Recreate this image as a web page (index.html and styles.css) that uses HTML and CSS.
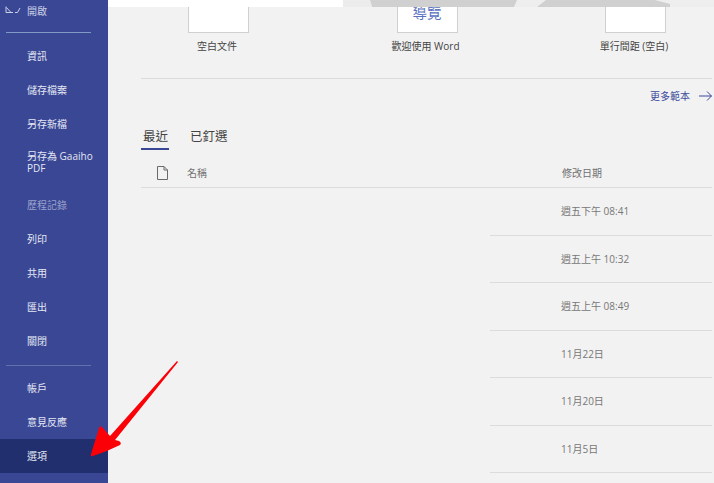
FILE: index.html
```html
<!DOCTYPE html>
<html>
	<head>
		<meta charset="UTF-8">
		<title>Word - 常用</title>
		<link rel="stylesheet" href="styles.css">
	</head>
	<body>
		<div class="page">
			<div class="sidebar">
				<div class="open-row">
					<svg class="open-icon" width="16" height="8" viewBox="0 0 16 8"><path d="M1 0.500V6.500H8M1.500 1.500L5.500 6M10 6.500H12.500L15 2" fill="none" stroke="#c9cfe6" stroke-width="1"/></svg>
					<span>開啟</span>
				</div>
				<div class="side-line line-top"></div>
				<a class="side-item">資訊</a>
				<a class="side-item">儲存檔案</a>
				<a class="side-item">另存新檔</a>
				<a class="side-item side-double">另存為 Gaaiho<br>PDF</a>
				<a class="side-item disabled">歷程記錄</a>
				<a class="side-item">列印</a>
				<a class="side-item">共用</a>
				<a class="side-item">匯出</a>
				<a class="side-item">關閉</a>
				<div class="side-line line-bottom"></div>
				<a class="side-item">帳戶</a>
				<a class="side-item">意見反應</a>
				<a class="side-item active">選項</a>
			</div>
			<div class="main">
				<div class="banner">
					<svg width="606" height="7" viewBox="0 0 606 7">
						<path d="M235 0H262L264 7H235Z" fill="#ececec"/>
						<path d="M405 0H440L430 7H405ZM547 0H606V7H560Z" fill="#eeeeee"/>
						<path d="M262 0H409L406 7H264ZM438 0H547L562 4V7H429Z" fill="#d0d0d0"/>
					</svg>
				</div>
				<div class="templates">
					<div class="template">
						<div class="thumb"></div>
						<div class="tpl-name">空白文件</div>
					</div>
					<div class="template">
						<div class="thumb thumb-tour">導覽</div>
						<div class="tpl-name">歡迎使用 Word</div>
					</div>
					<div class="template">
						<div class="thumb"></div>
						<div class="tpl-name">單行間距 (空白)</div>
					</div>
				</div>
				<div class="more-row">
					<span>更多範本</span>
					<svg width="13" height="10" viewBox="0 0 13 10"><path d="M0 5H12.500M8 0.500L12.500 5L8 9.500" fill="none" stroke="#3b4a9c" stroke-width="1"/></svg>
				</div>
				<div class="tabs">
					<div class="tab tab-on">最近</div>
					<div class="tab">已釘選</div>
				</div>
				<div class="list-head">
					<svg class="file-icon" width="11" height="14" viewBox="0 0 11 14"><path d="M0.500 0.500H7L10.500 4V13.500H0.500ZM7 0.500V4H10.500" fill="none" stroke="#6a6a6a" stroke-width="1"/></svg>
					<span class="col-name">名稱</span>
					<span class="col-date">修改日期</span>
				</div>
				<div class="rows">
					<div class="row">週五下午 08:41</div>
					<div class="row">週五上午 10:32</div>
					<div class="row">週五上午 08:49</div>
					<div class="row">11月22日</div>
					<div class="row">11月20日</div>
					<div class="row">11月5日</div>
				</div>
			</div>
			<svg class="arrow" width="100" height="105" viewBox="0 0 100 105"><path d="M87 1L88 2L25 80L29 81Q32 83 30 85Q16 92 3 96Q0 97 1 94L9 68Q10 65 12 67L20 76Z" fill="#fb0007"/></svg>
		</div>
	</body>
</html>
```

FILE: styles.css
```css
* { box-sizing: border-box; }
html, body { margin: 0; height: 100%; overflow: hidden; }
body { font-family: "Open Sans", "Noto Sans CJK TC", sans-serif; background: #f2f2f2; }

.page { display: flex; position: relative; width: 714px; height: 483px; overflow: hidden; }

.sidebar { width: 108px; height: 483px; flex: none; background: #3a4795; color: #e4e7f3; font-size: 10px; }
.open-row { display: flex; align-items: center; height: 20px; padding-left: 5px; color: #c9cfe6; font-size: 10px; }
.open-icon { margin-right: 6px; }
.side-line { height: 1px; margin-left: 6px; width: 85px; background: #7f9ac4; }
.line-top { margin-top: 12px; margin-bottom: 6px; }
.line-bottom { margin-top: 7px; margin-bottom: 5px; background: #6470ad; }
.side-item { display: block; height: 34px; padding-left: 27px; line-height: 34px; }
.side-double { height: 47px; padding-top: 9px; line-height: 12px; }
.disabled { color: #9aa2cb; }
.active { background: #212f6f; }

.main { flex: 1; min-width: 0; }
.banner { height: 7px; background: #fff; line-height: 0; overflow: hidden; }

.templates { display: flex; height: 71px; padding-left: 80px; }
.template { width: 61px; margin-right: 147.500px; flex: none; }
.thumb { height: 26px; background: #fff; border: 1px solid #d0d0d0; border-top: 0; overflow: hidden; font-size: 14.500px; color: #5a72c0; text-align: center; line-height: 12px; }
.tpl-name { width: 120px; margin-left: -31px; margin-top: 5px; text-align: center; font-size: 10px; color: #444; }

.more-row { display: flex; align-items: center; justify-content: flex-end; height: 34px; margin-left: 33px; margin-right: 2px; border-top: 1px solid #dcdcdc; color: #3b4a9c; font-size: 10px; }
.more-row span { margin-right: 9px; }

.tabs { display: flex; height: 25px; margin-top: 13px; margin-left: 33px; font-size: 12.500px; color: #444; }
.tab { margin-right: 22px; height: 25px; line-height: 23px; width: 39px; }
.tab-on { width: 28px; margin-right: 21px; padding-left: 2px; border-bottom: 2px solid #3a4795; }

.list-head { display: flex; align-items: flex-start; height: 38px; margin-left: 33px; margin-right: 2px; padding-top: 16px; border-bottom: 1px solid #dcdcdc; font-size: 10px; line-height: 14px; color: #707070; }
.file-icon { margin-left: 16px; }
.col-name { margin-left: 19px; width: 375px; }

.rows { margin-left: 382px; margin-right: 2px; }
.row { height: 47.500px; padding-left: 71px; line-height: 46px; border-bottom: 1px solid #dcdcdc; font-size: 10px; color: #777; }

.arrow { position: absolute; left: 90px; top: 360px; }
```
